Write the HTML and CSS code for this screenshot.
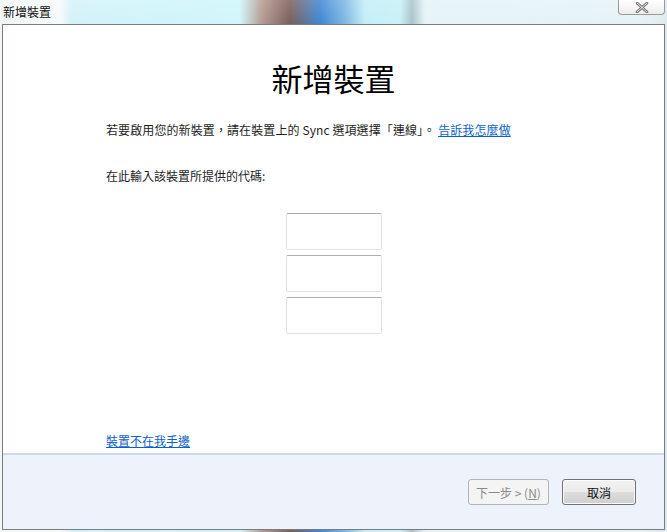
FILE: index.html
```html
<!DOCTYPE html>
<html lang="zh-Hant">
<head>
  <meta charset="UTF-8">
  <meta name="viewport" content="width=device-width, initial-scale=1.0">
  <title>新增裝置</title>
  <link rel="stylesheet" href="styles.css">
</head>
<body>
  <div class="titlebar">
    <span class="caption">新增裝置</span>
    <button class="close" aria-label="關閉">
      <svg width="14" height="11" viewBox="0 0 14 11">
        <path d="M2 1 L12 10 M12 1 L2 10" stroke="#6b6b6b" stroke-width="2.6" stroke-linecap="round"/>
        <path d="M2 1 L12 10 M12 1 L2 10" stroke="#f4f4f4" stroke-width="1" stroke-linecap="round"/>
      </svg>
    </button>
  </div>

  <div class="panel">
    <div class="content">
      <h1 class="header">新增裝置</h1>
      <p class="line first">若要啟用您的新裝置，請在裝置上的 Sync 選項選擇「連線」。 <a href="#" class="link">告訴我怎麼做</a></p>
      <p class="line second">在此輸入該裝置所提供的代碼:</p>
      <div class="codes">
        <input class="code" type="text">
        <input class="code" type="text">
        <input class="code" type="text">
      </div>
      <a href="#" class="link away">裝置不在我手邊</a>
    </div>
    <div class="footer">
      <button class="button next" disabled>下一步 &gt; (<u>N</u>)</button>
      <button class="button cancel">取消</button>
    </div>
  </div>
</body>
</html>
```

FILE: styles.css
```css
body {
  margin: 0;
  width: 667px;
  height: 532px;
  overflow: hidden;
  font-family: "Liberation Sans", "Noto Sans CJK TC", sans-serif;
  font-size: 12px;
  color: #1e1e1e;
  background: linear-gradient(90deg, #f3f6f7 0px, #f7fafb 60px, #d2f2f8 72px, #cff6fb 240px, #b59a90 262px, #7b5f5a 290px, #3f86d2 320px, #7fb8e4 345px, #c5eef6 365px, #c9f1f8 400px, #a9c3cc 412px, #e5f4f7 425px, #e6f3f6 640px, #dfeaf0 667px);
}

.titlebar {
  height: 24px;
  display: flex;
  justify-content: space-between;
  align-items: flex-start;
  background: linear-gradient(180deg, rgba(255,255,255,0.15), rgba(255,255,255,0.0));
}

.caption {
  padding: 4px 0 0 3px;
  font-family: "Noto Sans CJK TC", sans-serif;
  font-size: 12px;
  line-height: 16px;
  color: #111;
}

.close {
  width: 47px;
  height: 15px;
  margin-right: 2px;
  padding: 0;
  border: 1px solid #9a9a9a;
  border-top: 0;
  border-radius: 0 0 4px 4px;
  background: linear-gradient(180deg, #ffffff, #ececec);
  display: flex;
  align-items: center;
  justify-content: center;
}

.panel {
  margin: 0 2px;
  height: 504px;
  border: 1px solid #7c7c7c;
  display: flex;
  flex-direction: column;
  background: #ffffff;
}

.content {
  flex: 1;
  display: flex;
  flex-direction: column;
  padding: 35px 0 4px 103px;
}

.header {
  margin: 0 0 0 -103px;
  text-align: center;
  font-family: "Noto Sans CJK TC", sans-serif;
  font-weight: 400;
  font-size: 31px;
  line-height: 36px;
  color: #000;
}

.line {
  margin: 0;
  line-height: 16px;
  font-family: "Noto Sans CJK TC", sans-serif;
}

.line.first {
  margin-top: 26px;
  letter-spacing: 0.1px;
}

.line.second {
  margin-top: 30px;
}

.link {
  color: #0b61c9;
  text-decoration: underline;
  font-family: "Noto Sans CJK TC", sans-serif;
}

.codes {
  margin: 29px 0 0 180px;
  display: flex;
  flex-direction: column;
  gap: 5px;
}

.code {
  width: 96px;
  height: 37px;
  box-sizing: border-box;
  border: 1px solid #e1e2e8;
  border-top-color: #acaeb4;
  border-radius: 2px;
  background: #fff;
}

.away {
  margin-top: auto;
  line-height: 16px;
  align-self: flex-start;
}

.footer {
  height: 76px;
  border-top: 2px solid #ccd9e8;
  background-color: #eef3fb;
  display: flex;
  justify-content: flex-end;
  align-items: flex-start;
  gap: 13px;
  padding: 24px 28px 0 0;
  box-sizing: border-box;
}

.button {
  height: 26px;
  box-sizing: border-box;
  border-radius: 3px;
  font-family: "Noto Sans CJK TC", sans-serif;
  font-size: 12px;
  padding: 0;
}

.next {
  width: 81px;
  border: 1px solid #b1b5b9;
  background: #f4f4f4;
  color: #8a8a8a;
}

.cancel {
  width: 74px;
  border: 1px solid #707070;
  background: linear-gradient(180deg, #f2f2f2 0%, #ebebeb 50%, #dddddd 51%, #cfcfcf 100%);
  color: #111;
  box-shadow: inset 0 0 0 1px #fbfbfb;
}
```
